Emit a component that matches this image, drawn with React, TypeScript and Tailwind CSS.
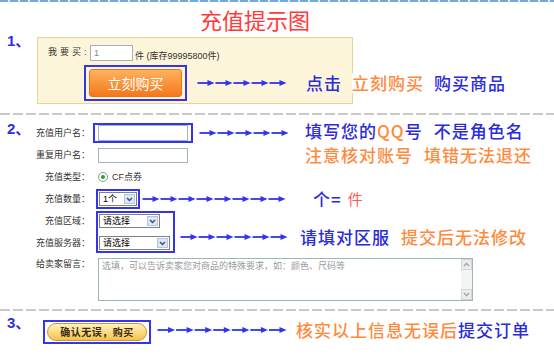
import React from "react";

function Arrows({ w, n }: { w: number; n: number }) {
  const p = w / n;
  return (
    <svg width={w} height={8} viewBox={`0 0 ${w} 8`} className="block shrink-0">
      {Array.from({ length: n }).map((_, i) => {
        const x = i * p;
        return (
          <g key={i} fill="#3434ee">
            <rect x={x + 0.5} y={3.1} width={p - 5} height={1.8} />
            <path d={`M${x + p - 7.5} 0.9 L${x + p - 0.5} 4 L${x + p - 7.5} 7.1 Z`} />
          </g>
        );
      })}
    </svg>
  );
}

function Chevron() {
  return (
    <svg width="7" height="5" viewBox="0 0 7 5" className="block">
      <path d="M1 1 L3.5 3.6 L6 1" stroke="#3b4f7a" strokeWidth="1.4" fill="none" />
    </svg>
  );
}

function FakeSelect({ label, className }: { label: string; className: string }) {
  return (
    <div
      className={`flex h-[14px] items-center justify-between border border-[#808080] bg-white pl-[3px] pr-[1px] ${className}`}
    >
      <span className="text-[9px] leading-none text-black">{label}</span>
      <span className="flex h-[10px] w-[11px] items-center justify-center border border-[#b3c3e2] bg-[#dde7f8]">
        <Chevron />
      </span>
    </div>
  );
}

function Label({ children }: { children: React.ReactNode }) {
  return (
    <div className="w-[61px] shrink-0 text-right text-[9px] leading-[12px] text-[#333]">
      {children}
    </div>
  );
}

export default function App() {
  return (
    <div className="relative h-[355px] w-[554px] overflow-hidden bg-white font-['Liberation_Sans','Noto_Sans_CJK_SC',sans-serif] text-[#333]">
      {/* top dashed blue line */}
      <div className="h-[2px] w-full bg-[linear-gradient(to_right,#74a9dd_8px,#d6e7f6_8px)] bg-[length:10px_2px]" />

      {/* title */}
      <div className="ml-[200px] mt-[6px] h-[22px] whitespace-nowrap font-['Noto_Sans_CJK_SC',sans-serif] text-[22px] leading-[22px] text-[#ff3a3a]">
        充值提示图
      </div>

      {/* section 1 */}
      <section className="mt-[3px] flex pl-[7px]">
        <div className="w-[30px] shrink-0 whitespace-nowrap text-[15px] font-bold leading-[15px] text-[#2e2ee6]">
          1、
        </div>
        <div className="mt-[4px] h-[67px] w-[316px] shrink-0 border border-[#e6d794] bg-[#fcf5d9] pl-[10px] pt-[7px]">
          <div className="flex items-start whitespace-nowrap">
            <span className="mt-[1px] w-[42px] text-[9px] leading-[12px] tracking-[3px] text-[#333]">
              我要买:
            </span>
            <div className="h-[16px] w-[43px] border border-[#a5b3bd] bg-white pl-[3px] text-[9px] leading-[14px] text-[#888]">
              1
            </div>
            <span className="ml-[2px] mt-[5px] text-[9px] leading-[12px] text-[#333]">
              件 (库存99995800件)
            </span>
          </div>
          <div className="ml-[36px] mt-[3px] flex items-center whitespace-nowrap">
            <div className="shrink-0 border-2 border-[#3434ee] px-[3px] py-[2px]">
              <div className="flex h-[28px] w-[93px] items-center justify-center rounded-[3px] border border-[#e8761f] bg-[linear-gradient(#ffb25e,#f4781b)] font-['Noto_Sans_CJK_SC',sans-serif] text-[14px] leading-none text-white">
                立刻购买
              </div>
            </div>
            <div className="ml-[10px]">
              <Arrows w={90} n={5} />
            </div>
            <span className="ml-[19px] font-['Noto_Sans_CJK_SC',sans-serif] text-[17px] font-medium leading-[20px] tracking-[1px] text-[#2b2bdc]">
              点击
            </span>
            <span className="ml-[10px] bg-white font-['Noto_Sans_CJK_SC',sans-serif] text-[17px] font-medium leading-[20px] tracking-[1px] text-[#ff8a3d]">
              立刻购买
            </span>
            <span className="ml-[10px] font-['Noto_Sans_CJK_SC',sans-serif] text-[17px] font-medium leading-[20px] tracking-[1px] text-[#2b2bdc]">
              购买商品
            </span>
          </div>
        </div>
      </section>

      {/* gray dashed */}
      <div className="mt-[9px] h-[2px] w-full bg-[linear-gradient(to_right,#c9c9c9_10px,transparent_10px)] bg-[length:13px_2px]" />

      {/* section 2 */}
      <section className="mt-[6px] flex pl-[7px]">
        <div className="w-[22px] shrink-0 whitespace-nowrap text-[15px] font-bold leading-[15px] text-[#2e2ee6]">
          2、
        </div>
        <div className="flex flex-col whitespace-nowrap">
          {/* row 1 */}
          <div className="flex h-[23px] items-center">
            <Label>充值用户名：</Label>
            <div className="ml-[3px] shrink-0 border-2 border-[#3434ee] px-[3px]">
              <div className="h-[16px] w-[90px] border border-[#a5b3bd] bg-white" />
            </div>
            <div className="ml-[6px]">
              <Arrows w={90} n={5} />
            </div>
            <span className="mb-[3px] ml-[16px] font-['Noto_Sans_CJK_SC',sans-serif] text-[17px] font-medium leading-[20px] tracking-[1px] text-[#2b2bdc]">
              填写您的<span className="text-[#ff8a3d]">QQ</span>号
            </span>
            <span className="mb-[3px] ml-[11px] font-['Noto_Sans_CJK_SC',sans-serif] text-[17px] font-medium leading-[20px] tracking-[1px] text-[#2b2bdc]">
              不是角色名
            </span>
          </div>

          {/* row 2 */}
          <div className="flex h-[22px] items-center">
            <Label>重复用户名：</Label>
            <div className="ml-[8px] h-[15px] w-[90px] shrink-0 border border-[#a5b3bd] bg-white" />
            <span className="ml-[117px] font-['Noto_Sans_CJK_SC',sans-serif] text-[17px] font-medium leading-[20px] tracking-[1px] text-[#ff8a3d]">
              注意核对账号
            </span>
            <span className="ml-[11px] font-['Noto_Sans_CJK_SC',sans-serif] text-[17px] font-medium leading-[20px] tracking-[1px] text-[#ff8a3d]">
              填错无法退还
            </span>
          </div>

          {/* row 3 */}
          <div className="flex h-[22px] items-center">
            <Label>充值类型：</Label>
            <span className="ml-[8px] flex h-[10px] w-[10px] shrink-0 items-center justify-center rounded-full border border-[#7aa67a] bg-white">
              <span className="h-[4px] w-[4px] rounded-full bg-[#2f9a2f]" />
            </span>
            <span className="ml-[4px] text-[9px] leading-[12px] text-[#333]">CF点券</span>
          </div>

          {/* row 4 */}
          <div className="flex h-[22px] items-center">
            <Label>充值数量：</Label>
            <div className="ml-[6px] shrink-0 border-2 border-[#3434ee] p-[1px]">
              <FakeSelect label="1个" className="w-[38px]" />
            </div>
            <div className="ml-[2px]">
              <Arrows w={144} n={8} />
            </div>
            <span className="ml-[27px] font-['Noto_Sans_CJK_SC',sans-serif] text-[17px] font-medium leading-[20px] tracking-[1px] text-[#2b2bdc]">
              个=
            </span>
            <span className="ml-[6px] font-['Noto_Sans_CJK_SC',sans-serif] text-[15px] leading-[20px] text-[#ff5a5a]">
              件
            </span>
          </div>

          {/* rows 5-6 */}
          <div className="flex h-[44px] items-start">
            <div className="flex flex-col">
              <div className="flex h-[22px] items-center">
                <Label>充值区域：</Label>
              </div>
              <div className="flex h-[22px] items-center">
                <Label>充值服务器：</Label>
              </div>
            </div>
            <div className="ml-[6px] mt-[1px] flex w-[79px] shrink-0 flex-col gap-[8px] border-2 border-[#3434ee] p-[1px]">
              <FakeSelect label="请选择" className="w-[61px]" />
              <FakeSelect label="请选择" className="w-[71px]" />
            </div>
            <div className="ml-[5px] mt-[17px] flex h-[20px] items-center">
              <Arrows w={108} n={6} />
              <span className="ml-[12px] font-['Noto_Sans_CJK_SC',sans-serif] text-[17px] font-medium leading-[20px] tracking-[1px] text-[#2b2bdc]">
                请填对区服
              </span>
              <span className="ml-[11px] font-['Noto_Sans_CJK_SC',sans-serif] text-[17px] font-medium leading-[20px] tracking-[1px] text-[#ff8a3d]">
                提交后无法修改
              </span>
            </div>
          </div>

          {/* row 7 */}
          <div className="mt-[4px] flex items-start">
            <Label>给卖家留言：</Label>
            <div className="ml-[8px] flex h-[43px] w-[375px] shrink-0 border border-[#9eb3bc] bg-white">
              <div className="flex-1 pl-[3px] pt-[1px] text-[9px] leading-[12px] text-[#9a9a9a]">
                选填，可以告诉卖家您对商品的特殊要求，如：颜色、尺码等
              </div>
              <div className="flex w-[11px] flex-col justify-between bg-[#f4f4f4]">
                <div className="flex h-[11px] items-center justify-center border border-[#d6d6d6] bg-[#ececec]">
                  <svg width="7" height="5" viewBox="0 0 7 5" className="block">
                    <path d="M1 4 L3.5 1.4 L6 4" stroke="#a0a0a0" strokeWidth="1.2" fill="none" />
                  </svg>
                </div>
                <div className="flex h-[11px] items-center justify-center border border-[#d6d6d6] bg-[#ececec]">
                  <svg width="7" height="5" viewBox="0 0 7 5" className="block">
                    <path d="M1 1 L3.5 3.6 L6 1" stroke="#a0a0a0" strokeWidth="1.2" fill="none" />
                  </svg>
                </div>
              </div>
            </div>
          </div>
        </div>
      </section>

      {/* gray dashed */}
      <div className="mt-[8px] h-[2px] w-full bg-[linear-gradient(to_right,#c9c9c9_10px,transparent_10px)] bg-[length:13px_2px]" />

      {/* section 3 */}
      <section className="flex items-start whitespace-nowrap pl-[7px]">
        <div className="mt-[4px] w-[36px] shrink-0 text-[15px] font-bold leading-[15px] text-[#2e2ee6]">
          3、
        </div>
        <div className="mt-[9px] shrink-0 border-2 border-[#3434ee] px-[2px] py-[1px]">
          <div className="flex h-[18px] w-[100px] items-center justify-center rounded-full border border-[#c9973a] bg-[linear-gradient(#fff3bd,#f6c24c)] font-['Noto_Sans_CJK_SC',sans-serif] text-[10px] font-bold leading-none tracking-[0.5px] text-[#3a2a10]">
            确认无误，购买
          </div>
        </div>
        <div className="ml-[6px] mt-[9px] flex h-[20px] items-center">
          <Arrows w={130} n={7} />
          <span className="ml-[9px] font-['Noto_Sans_CJK_SC',sans-serif] text-[17px] font-medium leading-[20px] tracking-[1px] text-[#ff8a3d]">
            核实以上信息无误后
          </span>
          <span className="font-['Noto_Sans_CJK_SC',sans-serif] text-[17px] font-medium leading-[20px] tracking-[1px] text-[#2b2bdc]">
            提交订单
          </span>
        </div>
      </section>
    </div>
  );
}
